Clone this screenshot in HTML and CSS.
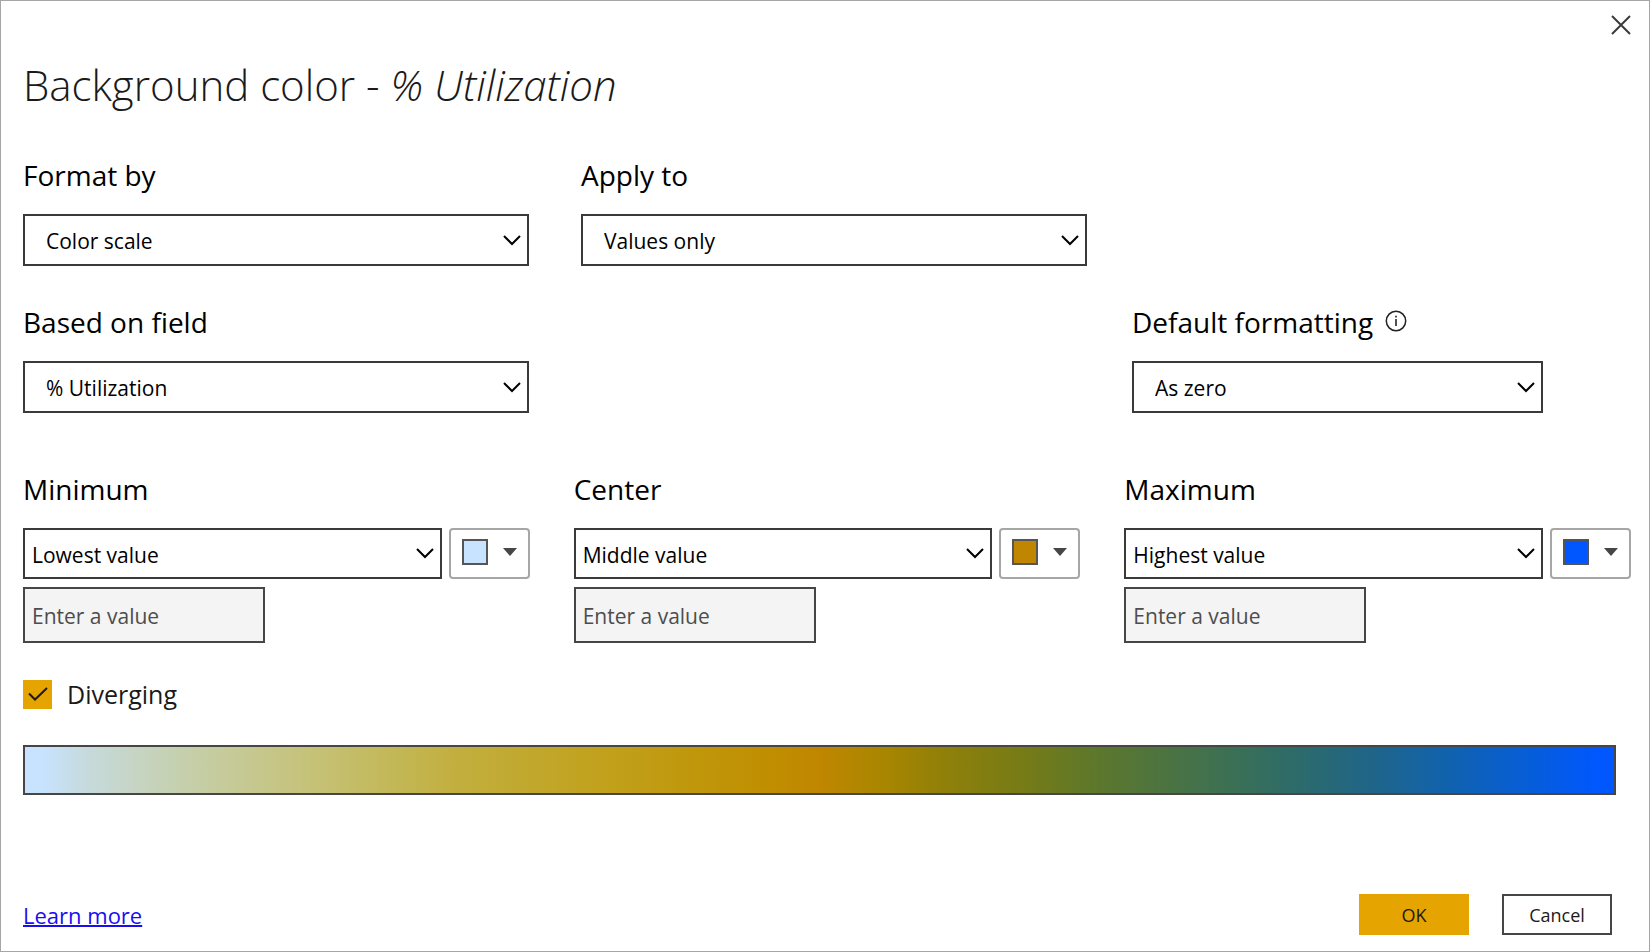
FILE: index.html
```html
<!DOCTYPE html>
<html lang="en">
<head>
<meta charset="utf-8">
<meta name="viewport" content="width=device-width, initial-scale=1">
<title>Background color - % Utilization</title>
<link rel="stylesheet" href="styles.css">
</head>
<body>
<main class="dialog">
  <header class="header">
    <h1 class="title">Background color - <em>% Utilization</em></h1>
    <button class="close" type="button" aria-label="Close">
      <svg width="20" height="20" viewBox="0 0 20 20" fill="none" stroke="#3b3b3b" stroke-width="2"><path d="M1 1l18 18M19 1L1 19"/></svg>
    </button>
  </header>

  <form class="form">
    <div class="options">
      <div class="field field-format">
        <label class="label" for="format-by">Format by</label>
        <div class="select select-wide">
          <select id="format-by"><option>Color scale</option></select>
          <svg class="chevron" width="18" height="11" viewBox="0 0 18 11"><path d="M1 1l8 8 8-8"/></svg>
        </div>
      </div>
      <div class="field field-apply">
        <label class="label" for="apply-to">Apply to</label>
        <div class="select select-wide">
          <select id="apply-to"><option>Values only</option></select>
          <svg class="chevron" width="18" height="11" viewBox="0 0 18 11"><path d="M1 1l8 8 8-8"/></svg>
        </div>
      </div>
      <div class="field field-based">
        <label class="label" for="based-on">Based on field</label>
        <div class="select select-wide">
          <select id="based-on"><option>% Utilization</option></select>
          <svg class="chevron" width="18" height="11" viewBox="0 0 18 11"><path d="M1 1l8 8 8-8"/></svg>
        </div>
      </div>
      <div class="field field-default">
        <div class="label-row">
          <label class="label" for="default-formatting">Default formatting</label>
          <button class="info" type="button" aria-label="About default formatting">
            <svg width="22" height="22" viewBox="0 0 22 22"><circle cx="11" cy="11" r="9.7" fill="none" stroke="#222" stroke-width="1.5"/><path d="M10.2 9h1.6v7h-1.6zM10.2 5.8h1.6v1.7h-1.6z" fill="#222"/></svg>
          </button>
        </div>
        <div class="select select-wide">
          <select id="default-formatting"><option>As zero</option></select>
          <svg class="chevron" width="18" height="11" viewBox="0 0 18 11"><path d="M1 1l8 8 8-8"/></svg>
        </div>
      </div>
    </div>

    <div class="stops">
      <div class="field">
        <label class="label" for="minimum">Minimum</label>
        <div class="stop-row">
          <div class="select">
            <select id="minimum"><option>Lowest value</option></select>
            <svg class="chevron" width="18" height="11" viewBox="0 0 18 11"><path d="M1 1l8 8 8-8"/></svg>
          </div>
          <button class="color" type="button" aria-label="Minimum color">
            <span class="swatch swatch-min"></span>
            <svg width="14" height="8" viewBox="0 0 14 8"><path d="M0 0h14L7 8z" fill="#484644"/></svg>
          </button>
        </div>
        <input class="value" type="text" placeholder="Enter a value" aria-label="Minimum value">
      </div>
      <div class="field">
        <label class="label" for="center">Center</label>
        <div class="stop-row">
          <div class="select">
            <select id="center"><option>Middle value</option></select>
            <svg class="chevron" width="18" height="11" viewBox="0 0 18 11"><path d="M1 1l8 8 8-8"/></svg>
          </div>
          <button class="color" type="button" aria-label="Center color">
            <span class="swatch swatch-mid"></span>
            <svg width="14" height="8" viewBox="0 0 14 8"><path d="M0 0h14L7 8z" fill="#484644"/></svg>
          </button>
        </div>
        <input class="value" type="text" placeholder="Enter a value" aria-label="Center value">
      </div>
      <div class="field">
        <label class="label" for="maximum">Maximum</label>
        <div class="stop-row">
          <div class="select">
            <select id="maximum"><option>Highest value</option></select>
            <svg class="chevron" width="18" height="11" viewBox="0 0 18 11"><path d="M1 1l8 8 8-8"/></svg>
          </div>
          <button class="color" type="button" aria-label="Maximum color">
            <span class="swatch swatch-max"></span>
            <svg width="14" height="8" viewBox="0 0 14 8"><path d="M0 0h14L7 8z" fill="#484644"/></svg>
          </button>
        </div>
        <input class="value" type="text" placeholder="Enter a value" aria-label="Maximum value">
      </div>
    </div>

    <label class="diverging" for="diverging">
      <span class="check">
        <input id="diverging" type="checkbox" checked>
        <svg class="tick" width="20" height="14" viewBox="0 0 20 14"><path d="M1 6.5l6 6L19 1" fill="none" stroke="#1a1a1a" stroke-width="2"/></svg>
      </span>
      Diverging
    </label>

    <div class="gradient" role="img" aria-label="Color scale preview"></div>
  </form>

  <footer class="footer">
    <a class="learn" href="#learn-more">Learn more</a>
    <div class="actions">
      <button class="button button-primary" type="button">OK</button>
      <button class="button" type="button">Cancel</button>
    </div>
  </footer>
</main>
</body>
</html>
```

FILE: styles.css
```css
* {
  box-sizing: border-box;
}

body {
  margin: 0;
  background: #fff;
  color: #000;
  font-family: "Open Sans", "Noto Sans", sans-serif;
}

button,
input,
select {
  margin: 0;
  font: inherit;
  color: inherit;
}

svg {
  display: block;
}

.dialog {
  display: flex;
  flex-direction: column;
  min-height: 100vh;
  padding: 0 18px 16px 22px;
  border: 1px solid #a6a6a6;
}

.header {
  display: flex;
  justify-content: space-between;
  align-items: flex-start;
}

.title {
  margin: 0;
  padding-top: 54px;
  font-size: 42px;
  font-weight: 300;
  line-height: 60px;
  color: #1a1a1a;
}

.close {
  margin-top: 14px;
  padding: 0;
  border: 0;
  background: none;
}

.form {
  display: flex;
  flex-direction: column;
  padding-top: 40px;
}

.options {
  display: grid;
  grid-template-columns: 506fr 52fr 506fr 45fr 411fr 88fr;
  row-gap: 36px;
}

.field {
  display: flex;
  flex-direction: column;
  min-width: 0;
}

.field-format,
.field-based {
  grid-column: 1;
}

.field-apply {
  grid-column: 3;
}

.field-default {
  grid-column: 5;
}

.label {
  margin-bottom: 19px;
  font-size: 28px;
  line-height: 40px;
}

.label-row {
  display: flex;
  gap: 12px;
}

.info {
  height: 38px;
  padding: 0;
  border: 0;
  background: none;
}

.select {
  display: grid;
  flex: 1;
  align-items: center;
}

.select select {
  grid-area: 1 / 1;
  width: 100%;
  height: 51px;
  padding: 2px 40px 0 7px;
  appearance: none;
  border: 2px solid #3b3a39;
  border-radius: 0;
  background: #fff;
  font-size: 21px;
}

.select-wide select {
  height: 52px;
  padding: 2px 40px 0 21px;
}

.chevron {
  grid-area: 1 / 1;
  justify-self: end;
  margin-right: 8px;
  fill: none;
  stroke: #000;
  stroke-width: 2;
  pointer-events: none;
}

.stops {
  display: grid;
  grid-template-columns: repeat(3, 1fr);
  gap: 44px;
  padding-top: 56px;
}

.stop-row {
  display: flex;
  gap: 7px;
}

.color {
  display: flex;
  align-items: center;
  gap: 15px;
  width: 81px;
  padding: 0 0 4px 11px;
  border: 2px solid #a6a6a6;
  border-radius: 4px;
  background: #fff;
}

.swatch {
  width: 26px;
  height: 26px;
  border: 2px solid #555;
}

.swatch-min {
  background: #c7e3ff;
}

.swatch-mid {
  background: #c08600;
}

.swatch-max {
  background: #0057ff;
}

.value {
  width: 242px;
  height: 56px;
  margin-top: 8px;
  padding: 2px 7px 0;
  border: 2px solid #484644;
  border-radius: 0;
  background: #f4f4f4;
  font-size: 21px;
}

.value::placeholder {
  color: #4d4d4d;
  opacity: 1;
}

.diverging {
  display: flex;
  align-items: center;
  align-self: flex-start;
  gap: 15px;
  margin-top: 34px;
  font-size: 25px;
  line-height: 34px;
  color: #1a1a1a;
}

.check {
  display: grid;
  place-items: center;
}

.check input {
  grid-area: 1 / 1;
  width: 29px;
  height: 29px;
  appearance: none;
  background: #e6a400;
}

.tick {
  grid-area: 1 / 1;
  visibility: hidden;
  pointer-events: none;
}

.check input:checked + .tick {
  visibility: visible;
}

.gradient {
  height: 50px;
  margin: 34px 15px 0 0;
  border: 2px solid #484644;
  background: linear-gradient(
    to right,
    #c7e3ff 1%,
    #c6dadb 4%,
    #c6d3bb 8%,
    #c5ca97 13%,
    #c5c278 18%,
    #c3b858 23%,
    #c2af3f 27%,
    #c1a82c 32%,
    #c1a01a 37%,
    #c0970c 42%,
    #c08e00 47%,
    #c08600 50%,
    #a98600 54%,
    #958107 57%,
    #847e10 60%,
    #757b17 63%,
    #5f782a 67%,
    #4b7342 72%,
    #3b7055 76%,
    #2d6b6a 80%,
    #1e658a 85%,
    #1062b2 90%,
    #065ddb 95%,
    #0057ff 99%
  ) padding-box;
}

.footer {
  display: flex;
  justify-content: space-between;
  align-items: center;
  margin-top: auto;
  padding-right: 19px;
}

.learn {
  font-size: 22px;
  color: #1a0dee;
  text-decoration-thickness: 2px;
}

.actions {
  display: flex;
  gap: 33px;
}

.button {
  width: 110px;
  height: 41px;
  padding: 0;
  border: 2px solid #484644;
  background: #fff;
  font-size: 18px;
  color: #1a1a1a;
}

.button-primary {
  border-color: #e6a400;
  background: #e6a400;
}
```
